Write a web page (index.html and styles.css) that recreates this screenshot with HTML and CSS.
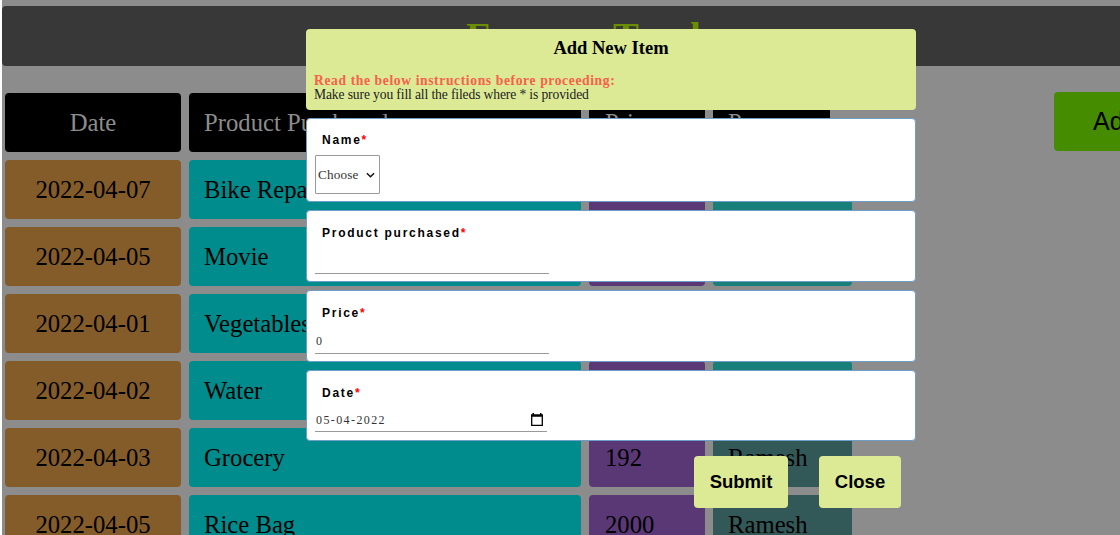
FILE: index.html
```html
<!DOCTYPE html>
<html lang="en">
<head>
<meta charset="utf-8">
<title>Expense Tracker</title>
<link rel="stylesheet" href="styles.css">
</head>
<body>
<div class="page">
  <header class="banner"><h1 class="banner-title">Expense Tracker</h1></header>
  <main class="content">
    <div class="table">
      <div class="row head"><div class="cell date">Date</div><div class="cell product">Product Purchased</div><div class="cell price">Price</div><div class="cell person">Person</div></div>
      <div class="row"><div class="cell date">2022-04-07</div><div class="cell product">Bike Repair</div><div class="cell price">500</div><div class="cell person suresh">Suresh</div></div>
      <div class="row"><div class="cell date">2022-04-05</div><div class="cell product">Movie</div><div class="cell price">300</div><div class="cell person suresh">Suresh</div></div>
      <div class="row"><div class="cell date">2022-04-01</div><div class="cell product">Vegetables</div><div class="cell price">150</div><div class="cell person suresh">Suresh</div></div>
      <div class="row"><div class="cell date">2022-04-02</div><div class="cell product">Water</div><div class="cell price">70</div><div class="cell person suresh">Suresh</div></div>
      <div class="row"><div class="cell date">2022-04-03</div><div class="cell product">Grocery</div><div class="cell price">192</div><div class="cell person ramesh">Ramesh</div></div>
      <div class="row"><div class="cell date">2022-04-05</div><div class="cell product">Rice Bag</div><div class="cell price">2000</div><div class="cell person ramesh">Ramesh</div></div>
    </div>
    <button class="add">Add</button>
  </main>
</div>
<section class="modal" role="dialog">
  <div class="intro">
    <h2 class="modal-title">Add New Item</h2>
    <p class="warning">Read the below instructions before proceeding:</p>
    <p class="note">Make sure you fill all the fileds where * is provided</p>
  </div>
  <div class="card name-card">
    <div class="label">Name<span class="star">*</span></div>
    <div class="select"><span class="select-text">Choose</span>
      <svg class="chevron" viewBox="0 0 10 6"><path d="M1 1l4 4 4-4" fill="none" stroke="#111" stroke-width="1.6"/></svg>
    </div>
  </div>
  <div class="card">
    <div class="label">Product purchased<span class="star">*</span></div>
    <div class="field"></div>
  </div>
  <div class="card">
    <div class="label">Price<span class="star">*</span></div>
    <div class="field"><span class="zero">0</span></div>
  </div>
  <div class="card date-card">
    <div class="label">Date<span class="star">*</span></div>
    <div class="field date-field"><span class="date-text">05-04-2022</span>
      <svg class="calendar" viewBox="0 0 12 13"><path d="M.7 2.2h10.6v10.1H.7z" fill="none" stroke="#000" stroke-width="1.3"/><path d="M0 1.5h12v2.3H0zM1.5 0H3v2H1.5zM9 0h1.5v2H9z"/></svg>
    </div>
  </div>
  <div class="actions"><button class="action submit">Submit</button><button class="action close">Close</button></div>
</section>
</body>
</html>
```
FILE: styles.css
```css
* { box-sizing: border-box; }
html { height: 100%; overflow: hidden; }
body { margin: 0; height: 100%; overflow: hidden; position: relative; background: #fff; font-family: "Liberation Serif", serif; color: #000; }
h1, h2, p { margin: 0; }
button { border: 0; border-radius: 4px; font-family: "Liberation Sans", sans-serif; color: #000; }
.page { margin-left: 2px; width: 1208px; min-height: 562px; padding-top: 6px; background: #8c8c8c; }
.banner { height: 60px; background: #383838; border-radius: 4px; text-align: center; }
.banner-title { padding-top: 8px; font-size: 38.8px; line-height: 44px; color: #6b8e00; }
.content { display: flex; justify-content: space-between; align-items: flex-start; padding: 27px 0 0 3px; }
.table { display: grid; gap: 8px; }
.row { display: grid; grid-template-columns: 176px 392px 116px 139px; gap: 8px; height: 59px; }
.cell { padding: 0 15px; border-radius: 4px; font-size: 24.7px; line-height: 60px; white-space: nowrap; overflow: hidden; }
.date { text-align: center; background: #835c2a; }
.product { background: #008c8c; }
.price { padding-left: 16px; background: #5a3876; }
.suresh { background: #188078; }
.ramesh { background: #335858; }
.head .cell { background: #000; color: #8c8c8c; }
.head .person { width: 116.5px; }
.add { width: 156px; height: 59px; margin-top: -1px; padding: 0 0 0 39px; text-align: left; background: #468c00; font-size: 25px; }
.modal { position: absolute; left: 306px; top: 29px; width: 610px; display: flex; flex-direction: column; gap: 8px; }
.intro { height: 81px; padding: 8px; background: #dcea95; border-radius: 4px; }
.modal-title { text-align: center; font-size: 18.5px; line-height: 22px; }
.warning { margin-top: 15px; font-size: 13.6px; line-height: 14px; font-weight: bold; color: #f7614a; letter-spacing: .61px; white-space: nowrap; }
.note { font-size: 13.6px; line-height: 14px; color: #222; letter-spacing: -.13px; }
.card { height: 72px; padding: 14px 8px 0; background: #fff; border: 1px solid #6f9fc9; border-radius: 4px; }
.name-card { height: 84px; padding-top: 13px; }
.date-card { height: 71px; }
.label { padding-left: 7px; font-family: "Liberation Sans", sans-serif; font-size: 12px; line-height: 16px; font-weight: bold; letter-spacing: 1.73px; }
.star { color: #f00; }
.select { display: flex; align-items: center; justify-content: space-between; width: 65px; height: 39px; margin-top: 7px; padding: 0 4px 0 2px; border: 1px solid #999; border-radius: 1px; }
.select-text { padding-top: 1px; font-size: 13.2px; letter-spacing: .15px; color: #333; }
.chevron { width: 9px; height: 6px; }
.field { width: 234px; height: 33px; border-bottom: 1px solid #999; font-size: 12px; line-height: 41px; color: #333; }
.zero { padding-left: 1px; font-size: 12px; }
.date-field { display: flex; justify-content: space-between; width: 232px; height: 31px; padding: 0 4px 0 1px; line-height: 39px; }
.date-text { font-size: 12px; letter-spacing: 1.4px; }
.calendar { width: 12px; height: 13px; margin-top: 12px; }
.actions { display: flex; justify-content: flex-end; gap: 31px; padding: 7px 15px 0 0; }
.action { height: 52px; padding: 0; background: #dcea95; font-size: 18.5px; font-weight: bold; }
.submit { width: 94px; }
.close { width: 82px; }
```
